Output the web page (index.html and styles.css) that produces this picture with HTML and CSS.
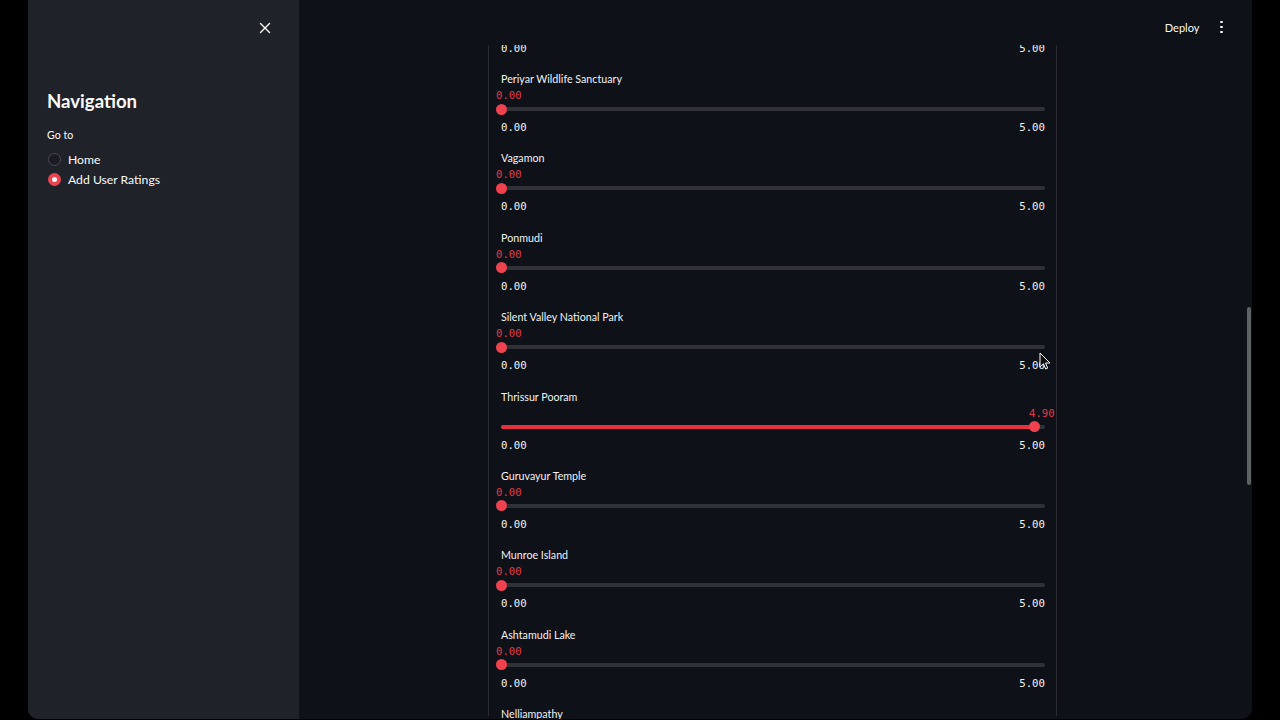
FILE: index.html
```html
<!DOCTYPE html>
<html lang="en">
<head>
<meta charset="utf-8">
<title>Add User Ratings</title>
<link rel="stylesheet" href="styles.css">
</head>
<body>
<div class="window">
  <aside class="sidebar">
    <div class="sidebar-top">
      <button class="close-btn" aria-label="Close sidebar">
        <svg viewBox="0 0 12 12" width="12" height="12"><path d="M1.5 1.5l9 9M10.5 1.5l-9 9" stroke="#fafafa" stroke-width="1.4" stroke-linecap="round"/></svg>
      </button>
    </div>
    <h2 class="nav-title">Navigation</h2>
    <div class="radio-label">Go to</div>
    <div class="radio-group">
      <label class="radio"><span class="dot"></span><span>Home</span></label>
      <label class="radio checked"><span class="dot"></span><span>Add User Ratings</span></label>
    </div>
  </aside>

  <main class="main">
    <header class="app-header">
      <span class="deploy">Deploy</span>
      <span class="kebab"><i></i><i></i><i></i></span>
    </header>
    <div class="viewport">
      <div class="form">
        <div class="ticks tail"><span>0.00</span><span>5.00</span></div>

        <div class="slider" style="--pct: 0%">
          <div class="s-label">Periyar Wildlife Sanctuary</div>
          <div class="s-value"><span>0.00</span></div>
          <div class="s-track"><div class="bar"><div class="fill"></div></div><div class="thumb"></div></div>
          <div class="ticks"><span>0.00</span><span>5.00</span></div>
        </div>

        <div class="slider" style="--pct: 0%">
          <div class="s-label">Vagamon</div>
          <div class="s-value"><span>0.00</span></div>
          <div class="s-track"><div class="bar"><div class="fill"></div></div><div class="thumb"></div></div>
          <div class="ticks"><span>0.00</span><span>5.00</span></div>
        </div>

        <div class="slider" style="--pct: 0%">
          <div class="s-label">Ponmudi</div>
          <div class="s-value"><span>0.00</span></div>
          <div class="s-track"><div class="bar"><div class="fill"></div></div><div class="thumb"></div></div>
          <div class="ticks"><span>0.00</span><span>5.00</span></div>
        </div>

        <div class="slider" style="--pct: 0%">
          <div class="s-label">Silent Valley National Park</div>
          <div class="s-value"><span>0.00</span></div>
          <div class="s-track"><div class="bar"><div class="fill"></div></div><div class="thumb"></div></div>
          <div class="ticks"><span>0.00</span><span>5.00</span></div>
        </div>

        <div class="slider" style="--pct: 98%">
          <div class="s-label">Thrissur Pooram</div>
          <div class="s-value"><span>4.90</span></div>
          <div class="s-track"><div class="bar"><div class="fill"></div></div><div class="thumb"></div></div>
          <div class="ticks"><span>0.00</span><span>5.00</span></div>
        </div>

        <div class="slider" style="--pct: 0%">
          <div class="s-label">Guruvayur Temple</div>
          <div class="s-value"><span>0.00</span></div>
          <div class="s-track"><div class="bar"><div class="fill"></div></div><div class="thumb"></div></div>
          <div class="ticks"><span>0.00</span><span>5.00</span></div>
        </div>

        <div class="slider" style="--pct: 0%">
          <div class="s-label">Munroe Island</div>
          <div class="s-value"><span>0.00</span></div>
          <div class="s-track"><div class="bar"><div class="fill"></div></div><div class="thumb"></div></div>
          <div class="ticks"><span>0.00</span><span>5.00</span></div>
        </div>

        <div class="slider" style="--pct: 0%">
          <div class="s-label">Ashtamudi Lake</div>
          <div class="s-value"><span>0.00</span></div>
          <div class="s-track"><div class="bar"><div class="fill"></div></div><div class="thumb"></div></div>
          <div class="ticks"><span>0.00</span><span>5.00</span></div>
        </div>

        <div class="slider" style="--pct: 0%">
          <div class="s-label">Nelliampathy</div>
          <div class="s-value"><span>0.00</span></div>
          <div class="s-track"><div class="bar"><div class="fill"></div></div><div class="thumb"></div></div>
          <div class="ticks"><span>0.00</span><span>5.00</span></div>
        </div>
      </div>
    </div>
    <div class="scrollbar"></div>
    <svg class="cursor" viewBox="0 0 12 18" width="12" height="18"><path d="M1 1v14l3.4-3.2 2.3 5.2 2-0.9-2.2-5.1H11z" fill="#111" stroke="#fff" stroke-width="1" stroke-linejoin="round"/></svg>
  </main>
</div>
</body>
</html>
```

FILE: styles.css
```css
* { box-sizing: border-box; }

html, body {
  margin: 0;
  height: 100%;
  background: #000;
}

body {
  font-family: Lato, "Noto Sans", sans-serif;
  color: #fafafa;
}

.window {
  margin-left: 28px;
  width: 1224px;
  height: 719px;
  display: flex;
  border-radius: 0 0 10px 10px;
  overflow: hidden;
  background: #0e1117;
}

/* ---- sidebar ---- */
.sidebar {
  width: 271px;
  flex: none;
  background: #202229;
  padding: 0 0 0 19px;
}

.sidebar-top {
  height: 56px;
  display: flex;
  align-items: center;
  justify-content: flex-end;
  padding-right: 28px;
}

.close-btn {
  border: 0;
  background: none;
  padding: 0;
  width: 12px;
  height: 12px;
  display: flex;
}

.nav-title {
  margin: 33px 0 0;
  font-size: 18.6px;
  line-height: 24px;
  font-weight: 700;
}

.radio-label {
  margin-top: 15px;
  font-size: 10.6px;
  line-height: 14px;
}

.radio-group {
  margin-top: 7px;
}

.radio {
  height: 20px;
  display: flex;
  align-items: center;
  gap: 7px;
  font-size: 12.2px;
}

.radio .dot {
  width: 13px;
  height: 13px;
  border-radius: 50%;
  border: 1px solid #4a4c55;
  background: #1a1c22;
  margin-left: 1px;
}

.radio.checked .dot {
  border: 4.5px solid #f0414e;
  background: #fafafa;
}

/* ---- main area ---- */
.main {
  flex: 1;
  position: relative;
  display: flex;
  flex-direction: column;
}

.app-header {
  height: 45px;
  flex: none;
  display: flex;
  align-items: center;
  justify-content: flex-end;
  padding: 9px 29px 0 0;
  gap: 21px;
  background: #0e1117;
  position: relative;
  z-index: 2;
}

.deploy {
  font-size: 11px;
}

.kebab {
  display: flex;
  flex-direction: column;
  gap: 2.5px;
}

.kebab i {
  width: 2.6px;
  height: 2.6px;
  border-radius: 50%;
  background: #fafafa;
}

.viewport {
  flex: 1;
  overflow: hidden;
}

.form {
  margin-left: 189px;
  width: 569px;
  height: 100%;
  border-left: 1px solid #2a2c32;
  border-right: 1px solid #2a2c32;
  padding: 0 11px 0 12px;
}

.slider {
  height: 79.375px;
}

.s-label {
  height: 16px;
  line-height: 15.5px;
  font-size: 10.7px;
  color: #f2f2f2;
}

.s-value {
  margin-top: 2px;
  height: 12px;
  line-height: 12px;
  font-family: "DejaVu Sans Mono", "Liberation Mono", monospace;
  font-size: 10.6px;
  color: #e23a47;
}

.s-value span {
  display: inline-block;
  margin-left: calc(var(--pct) - 5px);
}

.s-track {
  margin-top: 2.5px;
  height: 11px;
  position: relative;
  display: flex;
  align-items: center;
}

.bar {
  width: 100%;
  height: 4px;
  border-radius: 2px;
  background: #2f3137;
  overflow: hidden;
}

.fill {
  width: var(--pct);
  height: 100%;
  background: #e8313f;
}

.thumb {
  position: absolute;
  top: 0;
  left: calc(var(--pct) - 5.5px);
  width: 11px;
  height: 11px;
  border-radius: 50%;
  background: #f0414e;
}

.ticks {
  margin-top: 6.5px;
  height: 14px;
  line-height: 14px;
  display: flex;
  justify-content: space-between;
  font-family: "DejaVu Sans Mono", "Liberation Mono", monospace;
  font-size: 10.7px;
  color: #f2f2f2;
}

.ticks.tail {
  margin-top: -3px;
  margin-bottom: 15px;
}

/* overlay scrollbar and pointer */
.scrollbar {
  position: absolute;
  right: 1px;
  top: 307px;
  width: 4px;
  height: 178px;
  border-radius: 2px;
  background: #5d6263;
}

.cursor {
  position: absolute;
  left: 740px;
  top: 352px;
}
```
